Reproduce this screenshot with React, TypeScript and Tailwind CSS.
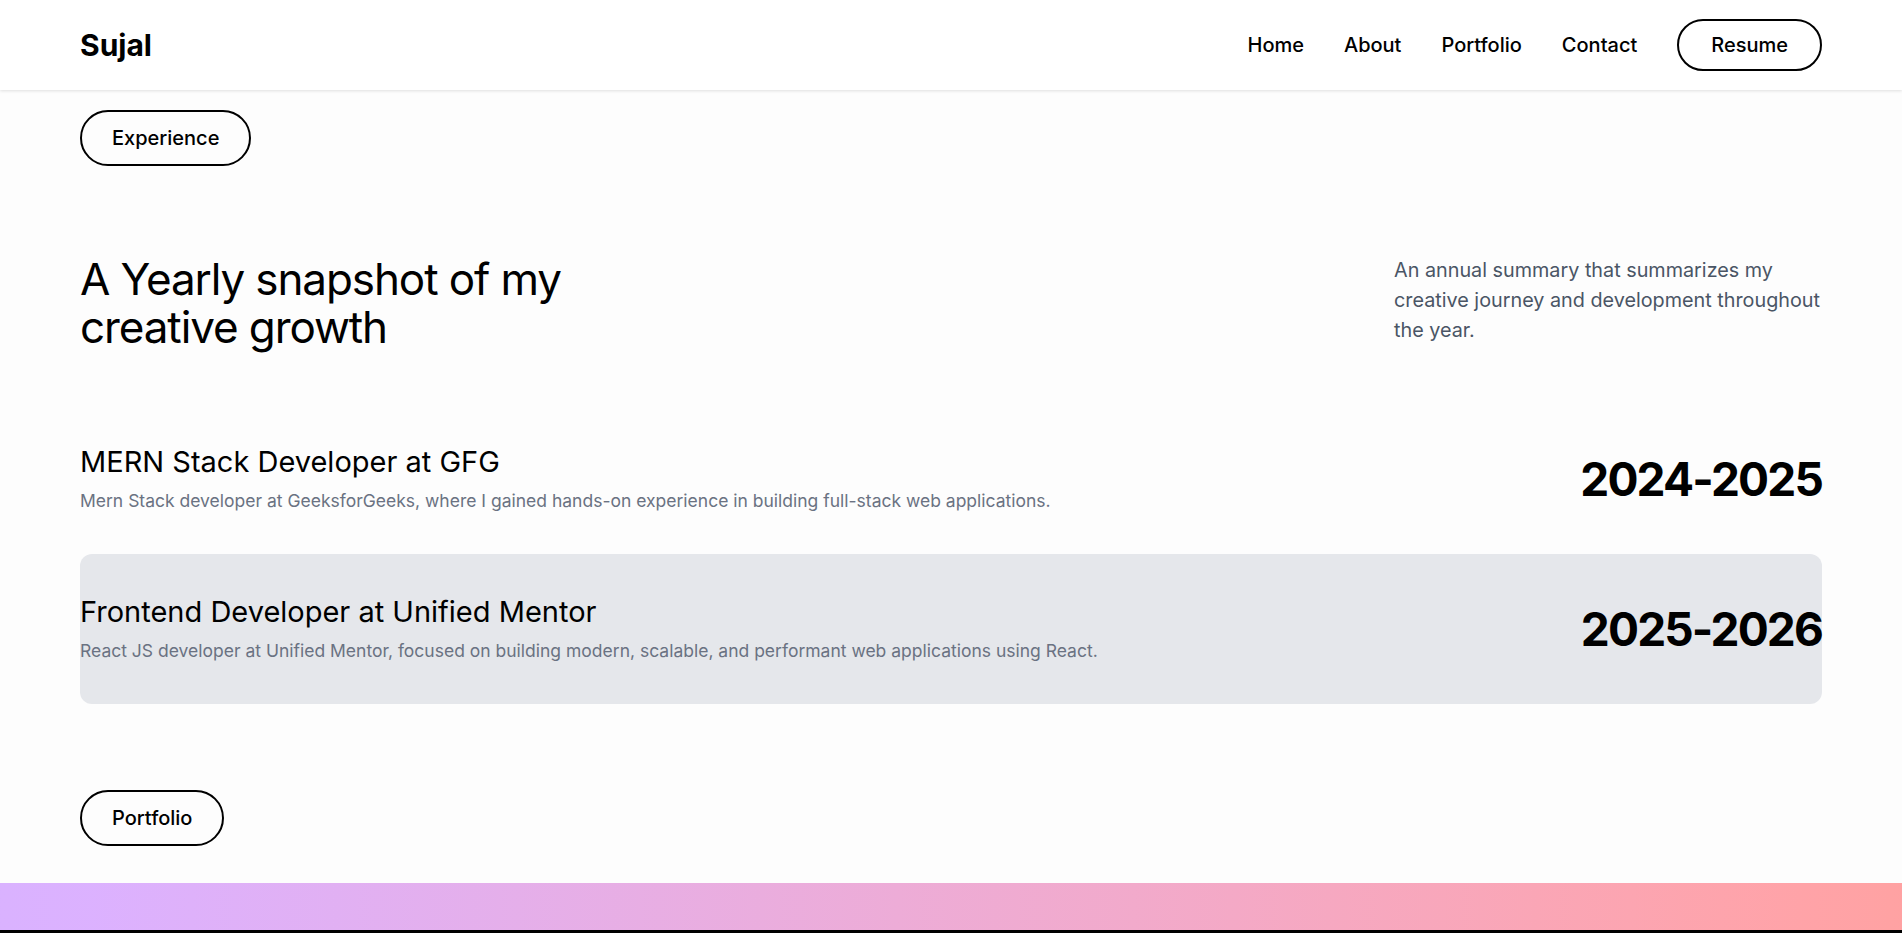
import React from "react";

const experiences = [
  {
    title: "MERN Stack Developer at GFG",
    des: "Mern Stack developer at GeeksforGeeks, where I gained hands-on experience in building full-stack web applications.",
    years: "2024-2025",
    active: false,
  },
  {
    title: "Frontend Developer at Unified Mentor",
    des: "React JS developer at Unified Mentor, focused on building modern, scalable, and performant web applications using React.",
    years: "2025-2026",
    active: true,
  },
];

const Navbar = () => (
  <header className="h-[90px] bg-white shadow-[0_1px_3px_rgba(0,0,0,0.12)] relative z-10">
    <div className="h-full px-20 flex items-center justify-between">
      <span className="text-3xl font-bold text-black">Sujal</span>
      <nav className="flex items-center gap-10 text-xl font-medium text-black">
        <a href="#home">Home</a>
        <a href="#about">About</a>
        <a href="#portfolio">Portfolio</a>
        <a href="#contact">Contact</a>
        <a href="#resume" className="rounded-full border-2 border-black px-8 py-2.5">
          Resume
        </a>
      </nav>
    </div>
  </header>
);

const Pill = ({ label }: { label: string }) => (
  <span className="inline-block rounded-full border-2 border-black px-[30px] py-3 text-xl font-medium text-black">
    {label}
  </span>
);

export default function App() {
  return (
    <div className="min-h-screen bg-[#fdfdfd] font-['Inter',sans-serif] text-black">
      <Navbar />

      <section id="experience" className="px-20 pt-5">
        <Pill label="Experience" />

        <div className="mt-[89px] flex items-start justify-between">
          <h2 className="max-w-[520px] text-[44px] font-normal leading-[1.1] tracking-tight">
            A Yearly snapshot of my creative growth
          </h2>
          <p className="max-w-[428px] text-[19.8px] leading-[30px] text-gray-600">
            An annual summary that summarizes my creative journey and development throughout the year.
          </p>
        </div>

        <div className="mt-[52px] flex flex-col">
          {experiences.map((exp) => (
            <div
              key={exp.years}
              className={`flex items-center justify-between rounded-xl py-10 ${exp.active ? "bg-gray-200" : ""}`}
            >
              <div>
                <h3 className="text-[29px] font-normal leading-9">{exp.title}</h3>
                <p className="mt-2 text-[17.5px] leading-[26px] text-gray-500">{exp.des}</p>
              </div>
              <span className="text-[46px] font-bold leading-none tracking-[-0.04em]">{exp.years}</span>
            </div>
          ))}
        </div>
      </section>

      <section id="portfolio" className="px-20 pt-[86px]">
        <Pill label="Portfolio" />
      </section>

      <div className="mt-[37px] h-[47px] bg-gradient-to-r from-purple-300 to-red-300" />
      <div className="h-[300px] bg-black" />
    </div>
  );
}
